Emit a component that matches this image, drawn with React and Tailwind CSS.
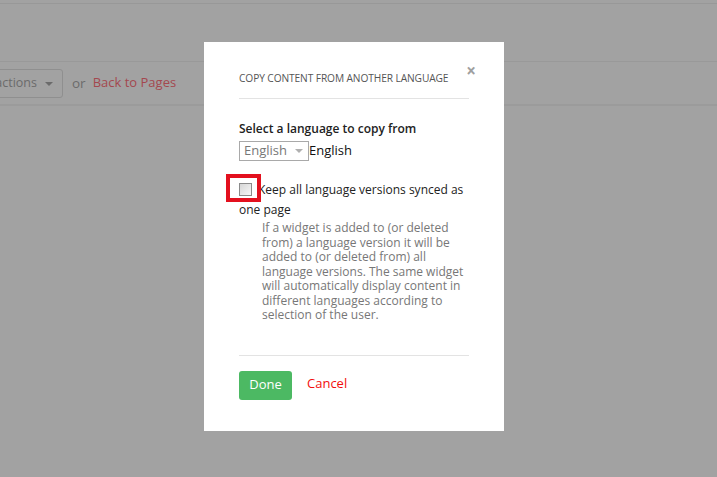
import { useState } from "react";

function Backdrop() {
  return (
    <div className="h-[477px] bg-[#a2a2a2] text-[#6b6b6b]">
      <div className="h-[3px]" />
      <div className="h-[58px] border-t border-[#989898]" />
      <div className="h-[43px] border-t border-[#999999] flex items-center">
        <div className="-ml-[57px] w-[120px] h-[29px] flex items-center justify-end gap-[8px] pr-[9px] border border-[#8f8f8f] rounded-[3px] text-[12.5px] whitespace-nowrap">
          <span>Page actions</span>
          <span className="w-0 h-0 border-x-[4px] border-x-transparent border-t-[4px] border-t-[#6b6b6b] mt-[2px]" />
        </div>
        <span className="ml-[9px] text-[13.5px]">or</span>
        <span className="ml-[7px] text-[13px] text-[#a4484f]">Back to Pages</span>
      </div>
      <div className="border-t-2 border-[#9b9b9b]" />
    </div>
  );
}

function CopyLanguageModal() {
  const [synced, setSynced] = useState(false);
  return (
    <div className="absolute left-[204px] top-[42px] w-[300px] h-[389px] bg-white px-[35px]">
      <div className="relative pt-[28px] pb-[12px] border-b border-[#e3e3e3]">
        <h3 className="text-[10.2px] uppercase text-[#555] tracking-[-0.1px] leading-[16px]">
          Copy content from another language
        </h3>
        <button className="absolute right-[-7px] top-[20px] text-[#a0a0a0] text-[17px] font-bold leading-none">
          ×
        </button>
      </div>

      <div className="pt-[21px]">
        <div className="text-[12px] font-semibold text-[#222] leading-[18px]">
          Select a language to copy from
        </div>
        <div className="flex items-center mt-[3px]">
          <div className="h-[20px] w-[70px] border border-[#a9a9a9] flex items-center justify-between pl-1 pr-[5px] text-[13px] text-[#777]">
            <span>English</span>
            <span className="w-0 h-0 border-x-[4px] border-x-transparent border-t-[4px] border-t-[#b0b0b0]" />
          </div>
          <span className="text-[13px] text-[#111]">English</span>
        </div>
      </div>

      <div className="mt-[16px] relative">
        <label className="block text-[12px] text-[#222] leading-[20px] pt-[3px]">
          <input
            type="checkbox"
            checked={synced}
            onChange={(e) => setSynced(e.target.checked)}
            className="appearance-none w-[13px] h-[13px] align-[-2px] mr-[6px] border border-[#8a8a8a] bg-gradient-to-br from-[#d6d6d6] to-[#f7f7f7] checked:bg-[#888]"
          />
          Keep all language versions synced as one page
        </label>
        <div className="absolute -left-[13px] -top-[3px] w-[35px] h-[28px] border-[4px] border-[#e3101e]" />
        <p className="pl-[23px] text-[12px] leading-[14.5px] text-[#777] mt-[1px]">
          If a widget is added to (or deleted from) a language version it will be added to (or deleted from) all language versions. The same widget will automatically display content in different languages according to selection of the user.
        </p>
      </div>

      <div className="mt-[32px] border-t border-[#e3e3e3] pt-[15px] flex items-center">
        <button className="h-[29px] w-[53px] rounded-[3px] bg-[#4cb963] text-white text-[13px]">
          Done
        </button>
        <button className="ml-[15px] text-[13px] text-[#f30d0d] -mt-[3px]">Cancel</button>
      </div>
    </div>
  );
}

export default function App() {
  return (
    <div className="relative h-[477px] overflow-hidden font-['Open_Sans',sans-serif]">
      <Backdrop />
      <CopyLanguageModal />
    </div>
  );
}
